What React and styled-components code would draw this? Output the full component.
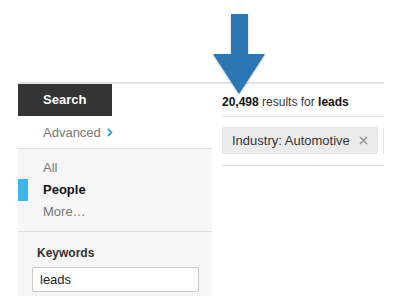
import React from "react"
import styled, { createGlobalStyle } from "styled-components"

const GlobalStyle = createGlobalStyle`
  body {
    margin: 0;
    background: #fff;
    font-family: "Liberation Sans", Arial, sans-serif;
  }
`

const Page = styled.div`
  position: relative;
  width: 404px;
  height: 300px;
  padding: 82px 20px 0 18px;
  box-sizing: border-box;
  overflow: hidden;
`

const TopRule = styled.div`
  height: 2px;
  background: #e2e2e2;
`

const Columns = styled.div`
  display: flex;
  gap: 10px;
`

const Sidebar = styled.aside`
  width: 194px;
  flex: none;
  display: flex;
  flex-direction: column;
`

const SearchTab = styled.div`
  width: 94px;
  height: 32px;
  box-sizing: border-box;
  padding-left: 25px;
  background: #333;
  color: #fff;
  font-weight: bold;
  font-size: 13px;
  line-height: 32px;
`

const AdvancedRow = styled.div`
  height: 32px;
  display: flex;
  align-items: center;
  gap: 6px;
  padding-left: 25px;
  color: #777;
  font-size: 13px;
  border-bottom: 1px solid #dedede;
`

const Panel = styled.div`
  background: #f6f6f6;
  height: 147px;
`

const NavList = styled.ul`
  list-style: none;
  margin: 0;
  padding: 8px 0 8px;
  border-bottom: 1px solid #dedede;
`

const NavItem = styled.li`
  height: 22px;
  line-height: 22px;
  font-size: 13px;
  box-sizing: border-box;
  padding-left: 15px;
  border-left: 10px solid ${(p) => (p.$active ? "#3fb5ee" : "transparent")};
  color: ${(p) => (p.$active ? "#111" : "#777")};
  font-weight: ${(p) => (p.$active ? "bold" : "normal")};
`

const Keywords = styled.div`
  padding: 13px 0 0 14px;
`

const Label = styled.div`
  font-size: 12px;
  font-weight: bold;
  color: #333;
  padding-left: 5px;
  line-height: 16px;
`

const Input = styled.input`
  display: block;
  margin-top: 6px;
  width: 167px;
  height: 25px;
  box-sizing: border-box;
  border: 1px solid #c9c9c9;
  border-radius: 2px;
  padding: 0 7px;
  font-family: inherit;
  font-size: 13px;
  color: #222;
  background: #fff;
  outline: none;
`

const Main = styled.main`
  flex: 1;
  min-width: 0;
  overflow: hidden;
`

const ResultCount = styled.div`
  padding: 10px 0 6px;
  line-height: 16px;
  font-size: 12px;
  color: #333;
  border-bottom: 1px solid #dedede;

  strong {
    color: #111;
  }
`

const TagRow = styled.div`
  display: flex;
  gap: 5px;
  padding: 10px 0;
  border-bottom: 1px solid #dedede;
  overflow: hidden;
`

const Tag = styled.div`
  flex: none;
  display: flex;
  align-items: center;
  gap: 9px;
  height: 27px;
  box-sizing: border-box;
  padding: 0 9px;
  background: #ebebeb;
  border: 1px solid #e3e3e3;
  border-radius: 2px;
  font-size: 13px;
  color: #333;
`

const NextTag = styled.div`
  flex: none;
  width: 60px;
  height: 28px;
  box-sizing: border-box;
  background: #f4f4f4;
  border: 1px solid #e3e3e3;
  border-radius: 2px;
`

const Arrow = styled.svg`
  position: absolute;
  left: 213px;
  top: 14px;
  filter: drop-shadow(0 1px 1px rgba(0, 0, 0, 0.25));
`

const Chevron = () => (
  <svg width="6" height="9" viewBox="0 0 6 9">
    <path d="M1 1l3.5 3.5L1 8" fill="none" stroke="#2fa6e6" strokeWidth="1.8" />
  </svg>
)

const Cross = () => (
  <svg width="9" height="9" viewBox="0 0 9 9">
    <path d="M1 1l7 7M8 1L1 8" stroke="#999" strokeWidth="1.6" />
  </svg>
)

const App = () => (
  <Page>
    <GlobalStyle />
    <TopRule />
    <Columns>
      <Sidebar>
        <SearchTab>Search</SearchTab>
        <AdvancedRow>
          Advanced <Chevron />
        </AdvancedRow>
        <Panel>
          <NavList>
            <NavItem>All</NavItem>
            <NavItem $active>People</NavItem>
            <NavItem>More…</NavItem>
          </NavList>
          <Keywords>
            <Label>Keywords</Label>
            <Input defaultValue="leads" />
          </Keywords>
        </Panel>
      </Sidebar>
      <Main>
        <ResultCount>
          <strong>20,498</strong> results for <strong>leads</strong>
        </ResultCount>
        <TagRow>
          <Tag>
            Industry: Automotive <Cross />
          </Tag>
          <NextTag />
        </TagRow>
      </Main>
    </Columns>
    <Arrow width="52" height="81" viewBox="0 0 52 81">
      <polygon points="18,0 35,0 35,40 52,40 26,80 0,40 18,40" fill="#2b77b3" />
    </Arrow>
  </Page>
)

export default App
